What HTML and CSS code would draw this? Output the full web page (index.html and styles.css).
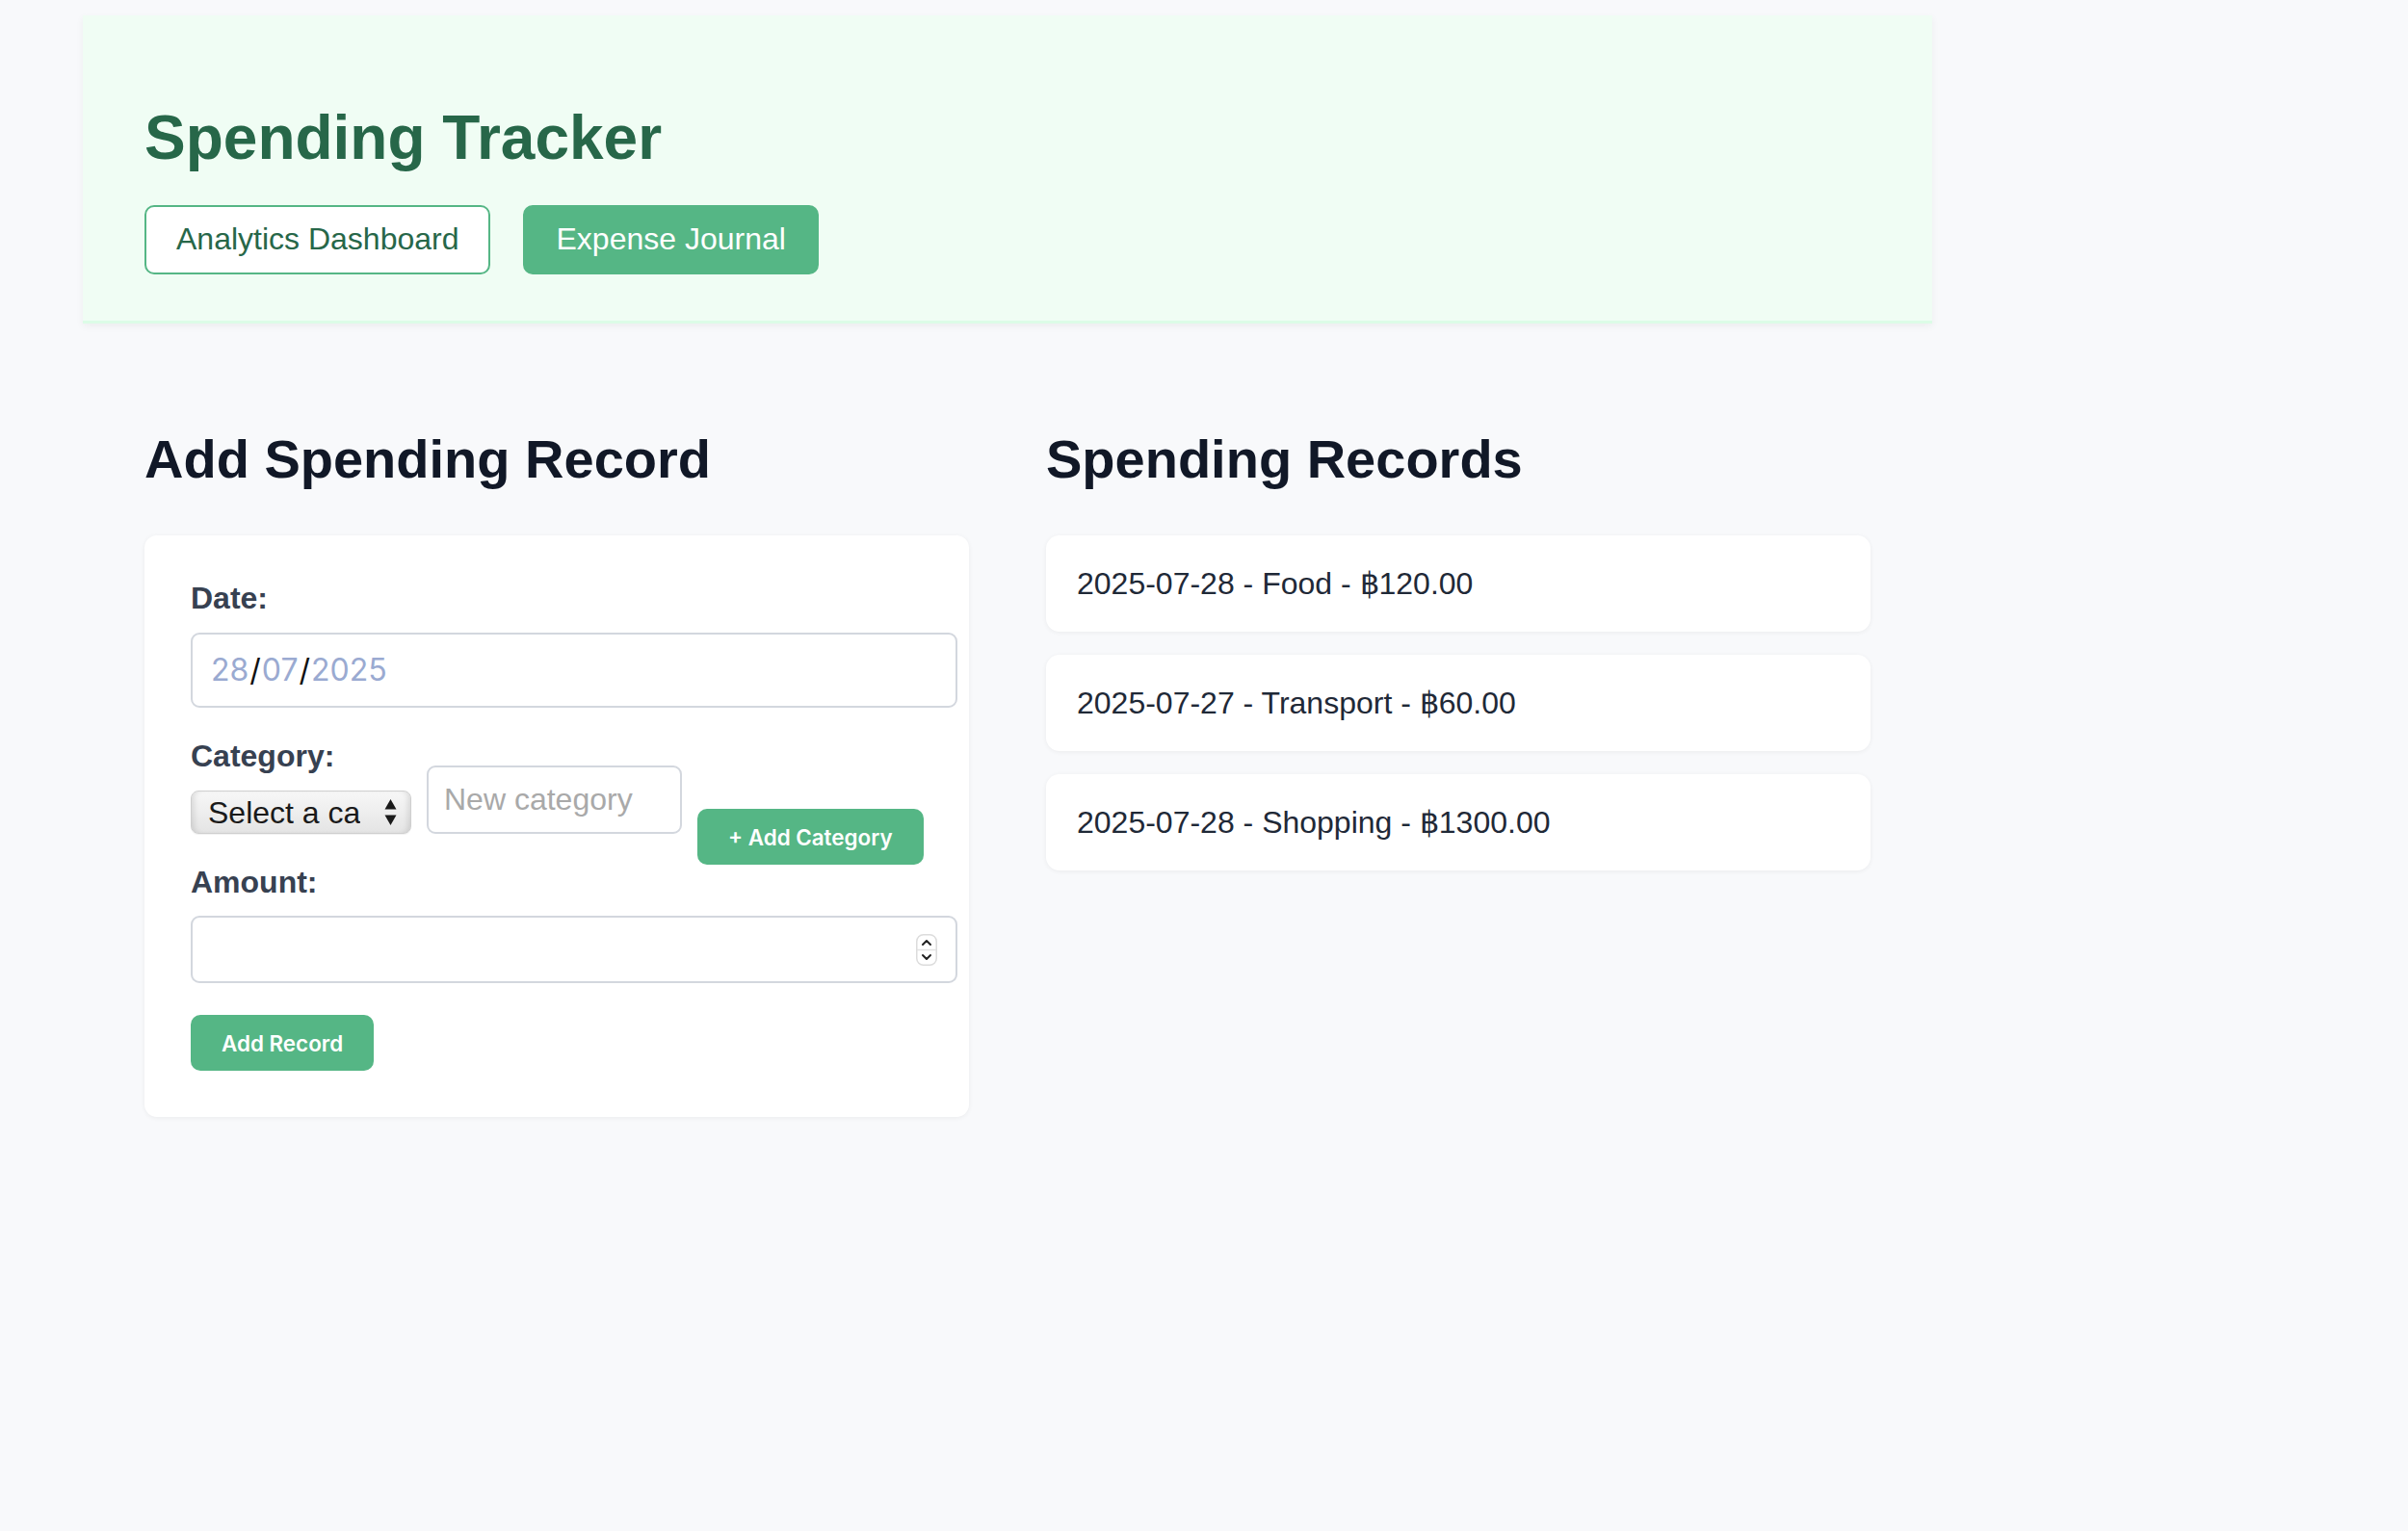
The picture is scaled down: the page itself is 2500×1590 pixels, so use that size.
FILE: index.html
```html
<!DOCTYPE html>
<html lang="en">
<head>
<meta charset="utf-8">
<title>Spending Tracker</title>
<link rel="stylesheet" href="styles.css">
</head>
<body>
<div class="container">
  <header class="header">
    <h1 class="title">Spending Tracker</h1>
    <nav class="nav">
      <a class="nav-btn nav-btn-outline">Analytics Dashboard</a>
      <a class="nav-btn nav-btn-filled">Expense Journal</a>
    </nav>
  </header>
  <main class="main">
    <section class="col">
      <h2 class="section-title">Add Spending Record</h2>
      <div class="card form-card">
        <div class="group">
          <label class="label">Date:</label>
          <div class="field date-field"><span class="date-text"><span class="seg">28</span><span class="sep">/</span><span class="seg">07</span><span class="sep">/</span><span class="seg">2025</span></span></div>
        </div>
        <div class="group group-tight">
          <label class="label">Category:</label>
          <div class="cat-row">
            <div class="select-wrap">
              <select class="select">
                <option>Select a category</option>
              </select>
              <svg class="select-arrows" width="13" height="27" viewBox="0 0 13 27"><polygon points="6.5,0 12.5,10.5 0.5,10.5" fill="#1a1a1a"/><polygon points="0.5,16.5 12.5,16.5 6.5,27" fill="#1a1a1a"/></svg>
            </div>
            <input class="field new-cat" type="text" placeholder="New category">
            <button class="btn btn-cat">+ Add Category</button>
          </div>
        </div>
        <div class="group">
          <label class="label label-amount">Amount:</label>
          <div class="field amount-field">
            <span class="spinner">
              <svg width="22" height="33" viewBox="0 0 22 33"><rect x="0.75" y="0.75" width="20.5" height="31.5" rx="7" fill="#fff" stroke="#dcdcdc" stroke-width="1.5"/><line x1="1" y1="16.5" x2="21" y2="16.5" stroke="#e2e2e2" stroke-width="1.5"/><polyline points="7,11 11,7 15,11" fill="none" stroke="#222" stroke-width="2" stroke-linecap="round" stroke-linejoin="round"/><polyline points="7,22 11,26 15,22" fill="none" stroke="#222" stroke-width="2" stroke-linecap="round" stroke-linejoin="round"/></svg>
            </span>
          </div>
        </div>
        <button class="btn btn-record">Add Record</button>
      </div>
    </section>
    <section class="col">
      <h2 class="section-title">Spending Records</h2>
      <ul class="records">
        <li class="card record">2025-07-28 - Food - ฿120.00</li>
        <li class="card record">2025-07-27 - Transport - ฿60.00</li>
        <li class="card record">2025-07-28 - Shopping - ฿1300.00</li>
      </ul>
    </section>
  </main>
</div>
</body>
</html>
```

FILE: styles.css
```css
* { box-sizing: border-box; }

html, body {
  margin: 0;
  padding: 0;
  background: #f8f9fb;
}

body {
  font-family: "Liberation Sans", Arial, Helvetica, sans-serif;
  color: #1f2937;
  min-height: 1590px;
}

.container {
  width: 1920px;
  margin: 16px 0 0 86px;
}

/* Header */
.header {
  background: #f0fdf4;
  padding: 48px 64px;
  border-bottom: 3px solid #dcfce7;
  box-shadow: 0 3px 8px rgba(0, 0, 0, 0.05);
}

.title {
  margin: 43px 0 32px;
  font-size: 64px;
  font-weight: 700;
  line-height: 73.6px;
  color: #276749;
}

.nav {
  display: flex;
  gap: 34px;
}

.nav-btn {
  display: flex;
  align-items: center;
  height: 72px;
  padding: 0 31px;
  border: 2px solid #55b685;
  border-radius: 10px;
  font-size: 32px;
  line-height: 37px;
  text-decoration: none;
}

.nav-btn-outline {
  background: #ffffff;
  color: #276749;
}

.nav-btn-filled {
  background: #55b685;
  color: #ffffff;
  padding: 0 32px;
}

/* Main */
.main {
  display: grid;
  grid-template-columns: 1fr 1fr;
  column-gap: 80px;
  padding: 109px 64px 0;
}

.col {
  min-width: 0;
}

.section-title {
  margin: 0 0 47px;
  font-size: 56px;
  font-weight: 700;
  line-height: 64.4px;
  color: #111827;
}

.card {
  background: #ffffff;
  border-radius: 13px;
  box-shadow: 0 1px 5px rgba(0, 0, 0, 0.06);
}

.form-card {
  padding: 47px 48px 48px;
}

.group {
  margin-bottom: 32px;
}

.group-tight {
  margin-bottom: 0;
}

.label {
  display: block;
  font-size: 32px;
  font-weight: 700;
  line-height: 37px;
  color: #374151;
  margin-bottom: 17px;
}

.group-tight .label {
  margin-bottom: 0;
}

.label-amount {
  margin-bottom: 16px;
}

.field {
  background: #ffffff;
  border: 2px solid #d3d7de;
  border-radius: 9px;
  font-size: 32px;
}

.date-field {
  box-sizing: content-box;
  width: 100%;
  height: 42px;
  padding: 16px;
  display: flex;
  align-items: center;
  font-family: Inter, "Liberation Sans", sans-serif;
  font-size: 32px;
  line-height: 42px;
}

.date-text {
  margin-left: 3px;
}

.date-field .seg {
  color: #9aaad1;
}

.date-field .sep {
  color: #111111;
  padding: 0 1px;
}

.amount-field {
  box-sizing: content-box;
  width: 100%;
  height: 34px;
  padding: 16px;
  display: flex;
  align-items: center;
  justify-content: flex-end;
}

.spinner {
  display: flex;
  width: 22px;
  height: 33px;
  margin-right: 3px;
}

/* Category row */
.cat-row {
  display: flex;
  align-items: flex-start;
  margin-top: -9px;
}

.select-wrap {
  position: relative;
  flex: none;
  width: 229px;
  height: 45px;
  margin-top: 26px;
  margin-right: 16px;
}

.select {
  -webkit-appearance: none;
  appearance: none;
  display: block;
  width: 100%;
  height: 45px;
  margin: 0;
  padding: 0 52px 0 17px;
  border: 1.5px solid #cfcfcf;
  border-radius: 8px;
  background: linear-gradient(to bottom, #f7f7f7 0%, #ededed 55%, #e4e4e4 100%);
  box-shadow: inset 6px 0 6px -4px rgba(0, 0, 0, 0.12), inset -6px 0 6px -4px rgba(0, 0, 0, 0.12), 0 1px 1px rgba(0, 0, 0, 0.06);
  font-family: "Liberation Sans", Arial, sans-serif;
  font-size: 32px;
  line-height: 40px;
  color: #1a1a1a;
  outline: none;
}

.select-arrows {
  position: absolute;
  right: 15px;
  top: 9px;
  pointer-events: none;
}

.new-cat {
  flex: none;
  width: 265px;
  height: 71px;
  margin: 0 16px 0 0;
  padding: 0 16px;
  font-family: "Liberation Sans", Arial, sans-serif;
  font-size: 32px;
  color: #1a1a1a;
  outline: none;
}

.new-cat::placeholder {
  color: #a9a9a9;
  opacity: 1;
}

.btn {
  display: flex;
  align-items: center;
  justify-content: center;
  height: 58px;
  padding: 0 32px;
  border: none;
  border-radius: 10px;
  background: #55b685;
  color: #ffffff;
  font-family: Inter, "Liberation Sans", sans-serif;
  font-weight: 600;
  font-size: 22.4px;
  line-height: 27px;
  white-space: nowrap;
}

.btn-cat {
  margin-top: 45px;
  flex: none;
}

.btn-record {
  margin-top: 33px;
}

/* Records */
.records {
  list-style: none;
  margin: 0;
  padding: 0;
  display: flex;
  flex-direction: column;
  gap: 24px;
}

.record {
  height: 100px;
  display: flex;
  align-items: center;
  padding: 0 32px;
  font-size: 32px;
  line-height: 37px;
  color: #1f2937;
  border-radius: 14px;
}
```
